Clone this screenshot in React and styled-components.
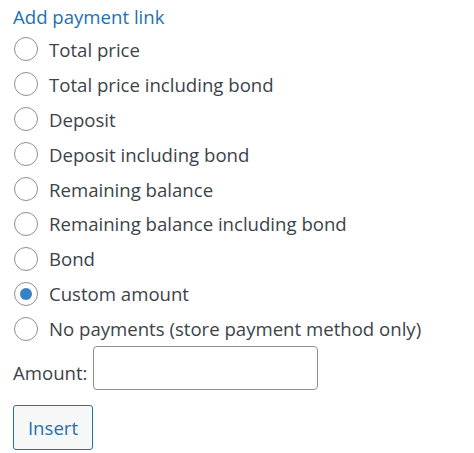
import React, { useState } from 'react'
import styled, { createGlobalStyle } from 'styled-components'

const GlobalStyle = createGlobalStyle`
  body {
    margin: 0;
    background: #fff;
    font-family: "Open Sans", "Noto Sans", sans-serif;
    color: #3c434a;
  }
`

const options = [
  'Total price',
  'Total price including bond',
  'Deposit',
  'Deposit including bond',
  'Remaining balance',
  'Remaining balance including bond',
  'Bond',
  'Custom amount',
  'No payments (store payment method only)',
]

const App = () => {
  const [selected, setSelected] = useState('Custom amount')

  return (
    <>
      <GlobalStyle />
      <Panel>
        <Title href="#">Add payment link</Title>
        <OptionList>
          {options.map((opt) => (
            <Option key={opt}>
              <Radio
                type="radio"
                name="payment"
                checked={selected === opt}
                onChange={() => setSelected(opt)}
              />
              {opt}
            </Option>
          ))}
        </OptionList>
        <AmountRow>
          <AmountLabel htmlFor="amount">Amount:</AmountLabel>
          <AmountInput id="amount" type="text" />
        </AmountRow>
        <InsertButton>Insert</InsertButton>
      </Panel>
    </>
  )
}

export default App

const Panel = styled.div`
  padding: 4px 13px;
  display: flex;
  flex-direction: column;
  font-size: 18.6px;
`

const Title = styled.a`
  color: #2271b1;
  text-decoration: none;
  line-height: 26px;
`

const OptionList = styled.div`
  display: flex;
  flex-direction: column;
  margin-top: 2px;
`

const Option = styled.label`
  display: flex;
  align-items: center;
  gap: 11px;
  height: 34.9px;
`

const Radio = styled.input`
  appearance: none;
  margin: 0 0 0 1px;
  width: 24px;
  height: 24px;
  border: 1px solid #8c8f94;
  border-radius: 50%;
  background: #fff;
  display: grid;
  place-items: center;
  box-sizing: border-box;

  &:checked::before {
    content: '';
    width: 12px;
    height: 12px;
    border-radius: 50%;
    background: #3582c4;
  }
`

const AmountRow = styled.div`
  display: flex;
  align-items: center;
  gap: 6px;
`

const AmountLabel = styled.label`
  padding-top: 8px;
`

const AmountInput = styled.input`
  width: 225px;
  height: 44px;
  box-sizing: border-box;
  border: 1px solid #8c8f94;
  border-radius: 4px;
  font: inherit;
  padding: 0 8px;
`

const InsertButton = styled.button`
  align-self: flex-start;
  margin-top: 15px;
  width: 80px;
  height: 45px;
  border: 1px solid #2271b1;
  border-radius: 3px;
  background: #f6f7f7;
  color: #2271b1;
  font: inherit;
  cursor: pointer;
`
